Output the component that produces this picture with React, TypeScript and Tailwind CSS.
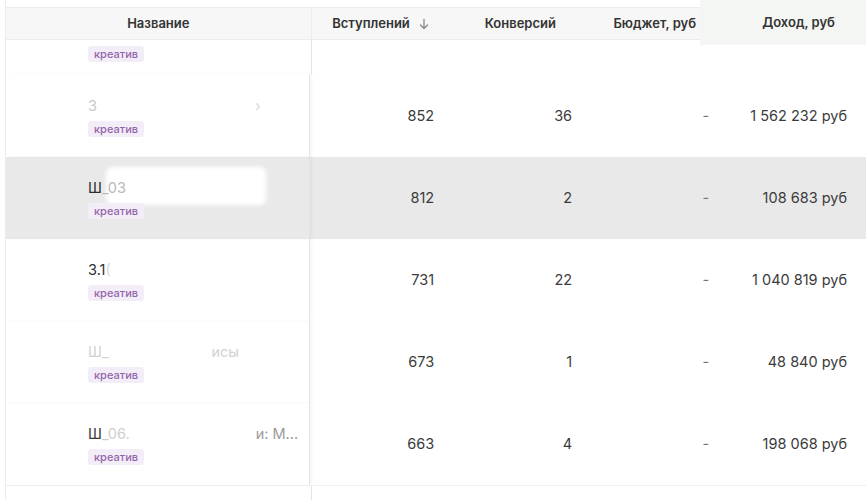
import React from "react"

type Row = {
  name: React.ReactNode
  joins: string
  conv: string
  budget: string
  income: string
  active?: boolean
}

const rows: Row[] = [
  {
    name: (
      <span className="text-[#c8c8c8]">
        З<span className="ml-[158px] text-[#d6d6d6]">›</span>
      </span>
    ),
    joins: "852",
    conv: "36",
    budget: "-",
    income: "1 562 232 руб",
  },
  {
    name: (
      <span>
        <span className="text-[#2e2e2e]">Ш</span>
        <span className="text-[#b9b9b9]">_03</span>
      </span>
    ),
    joins: "812",
    conv: "2",
    budget: "-",
    income: "108 683 руб",
    active: true,
  },
  {
    name: (
      <span>
        <span className="text-[#2e2e2e]">3.1</span>
        <span className="text-[#d8d8d8]">(</span>
      </span>
    ),
    joins: "731",
    conv: "22",
    budget: "-",
    income: "1 040 819 руб",
  },
  {
    name: (
      <span className="text-[#d2d2d2]">
        Ш_<span className="ml-[103px]">исы</span>
      </span>
    ),
    joins: "673",
    conv: "1",
    budget: "-",
    income: "48 840 руб",
  },
  {
    name: (
      <span>
        <span className="text-[#3a3a3a]">Ш</span>
        <span className="text-[#cfcfcf]">_06.</span>
        <span className="ml-[126px] text-[#9a9a9a]">и: М...</span>
      </span>
    ),
    joins: "663",
    conv: "4",
    budget: "-",
    income: "198 068 руб",
  },
]

function Tag() {
  return (
    <span className="inline-flex h-[16px] items-center rounded-[3px] bg-[#f3edf7] px-[6px] text-[11px] font-medium text-[#9465ad]">
      креатив
    </span>
  )
}

function DataRow({ row }: { row: Row }) {
  const bg = row.active ? "bg-[#e9e9e9]" : "bg-white"
  return (
    <div className={`flex h-[82px] ${bg} text-[14.5px] text-[#3b3b3b]`}>
      <div className="relative flex w-[306px] flex-col justify-center border-r border-[#e4e4e4] pt-[2px] pl-[82px] shadow-[2px_0_3px_rgba(0,0,0,0.04)]">
        {row.active && (
          <div className="absolute left-[100px] top-[10px] h-[38px] w-[160px] rounded-[6px] bg-white blur-[2px]" />
        )}
        <div className="relative h-[22px] leading-[22px]">{row.name}</div>
        <div className="relative mt-[0px]">
          <Tag />
        </div>
      </div>
      <div className="flex w-[139px] items-center justify-end pr-[14px]">{row.joins}</div>
      <div className="flex w-[140px] items-center justify-end pr-[15px]">{row.conv}</div>
      <div className="flex w-[135px] items-center justify-end pr-[12px] text-[#777]">{row.budget}</div>
      <div className="flex w-[146px] items-center justify-end pr-[19px]">{row.income}</div>
    </div>
  )
}

export default function App() {
  return (
    <div className="h-[500px] w-[866px] overflow-hidden bg-white font-['Inter','Liberation_Sans',sans-serif]">
      <div className="ml-[5px] border-l border-[#ececec]">
        {/* Header */}
        <div className="flex h-[40px] items-start text-[13px] font-semibold text-[#333]">
          <div className="mt-[7px] flex h-[33px] w-[306px] items-center justify-center border-y border-r border-[#ececec] bg-[#f6f7f6]">
            Название
          </div>
          <div className="mt-[7px] flex h-[33px] w-[139px] items-center justify-center gap-[8px] border-y border-[#ececec] bg-[#f6f7f6]">
            Вступлений
            <svg width="12" height="12" viewBox="0 0 12 12" fill="none" stroke="#888" strokeWidth="1.3" strokeLinecap="round" strokeLinejoin="round">
              <path d="M6 1.5v9M2.5 7L6 10.5 9.5 7" />
            </svg>
          </div>
          <div className="mt-[7px] flex h-[33px] w-[140px] items-center justify-center border-y border-[#ececec] bg-[#f6f7f6]">
            Конверсий
          </div>
          <div className="mt-[7px] flex h-[33px] w-[110px] items-center justify-end border-y border-[#ececec] bg-[#f6f7f6] pr-[4px]">
            Бюджет, руб
          </div>
          <div className="flex h-[45px] w-[166px] items-center bg-[#f4f6f3] pl-[62px]">Доход, руб</div>
        </div>

        {/* Partially scrolled first row */}
        <div className="flex h-[35px] bg-white">
          <div className="w-[306px] border-r border-[#e4e4e4] pl-[82px]">
            <Tag />
          </div>
        </div>

        {rows.map((row, i) => (
          <DataRow key={i} row={row} />
        ))}

        <div className="flex h-[20px] border-t border-[#f0f0f0]">
          <div className="w-[306px] border-r border-[#e4e4e4]" />
        </div>
      </div>
    </div>
  )
}
